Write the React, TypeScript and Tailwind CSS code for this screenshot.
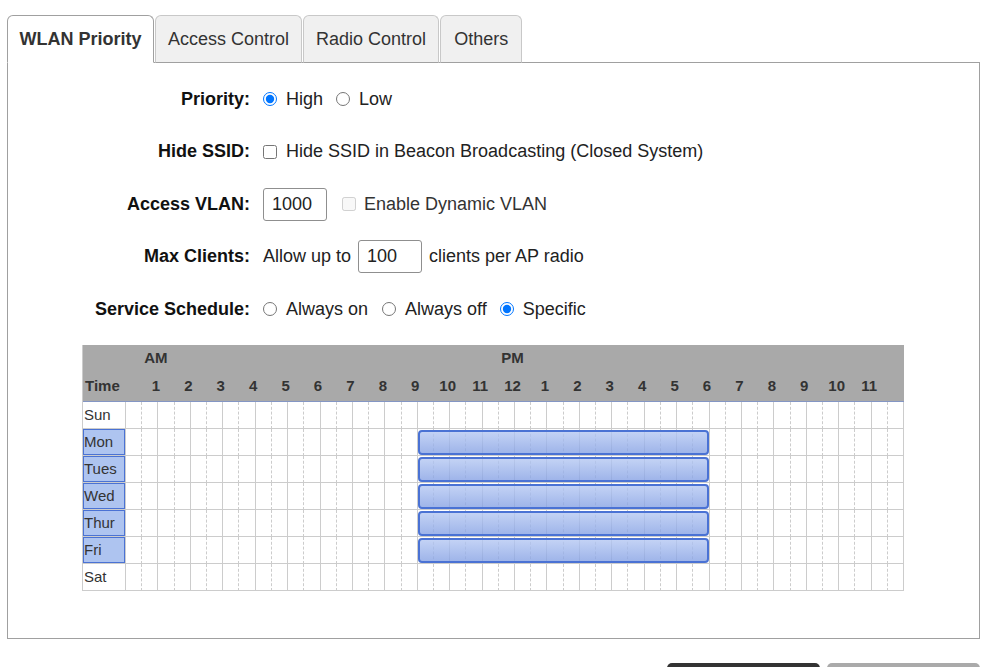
import { ReactNode } from "react"

const tabs = [
  { name: "WLAN Priority", pad: "px-[11.5px]" },
  { name: "Access Control", pad: "px-[12px]" },
  { name: "Radio Control", pad: "px-[12px]" },
  { name: "Others", pad: "px-[13px]" },
]
const days = ["Sun", "Mon", "Tues", "Wed", "Thur", "Fri", "Sat"]
const pmHours = ["1", "2", "3", "4", "5", "6", "7", "8", "9", "10", "11"]
const hourLabels = [...pmHours, "12", ...pmHours]

const Row = ({ label, children }: { label: string; children: ReactNode }) => (
  <div className="grid grid-cols-[242px_1fr] gap-[13px] items-center h-[52.5px]">
    <div className="text-right font-bold text-[#111]">{label}</div>
    <div className="flex items-center">{children}</div>
  </div>
)

const Radio = ({ checked, label, className = "" }: { checked?: boolean; label: string; className?: string }) => (
  <label className={"flex items-center " + className}>
    <input type="radio" defaultChecked={checked} className="w-[14px] h-[14px] m-0 accent-[#0075ff]" />
    <span className="ml-[9px]">{label}</span>
  </label>
)

const Schedule = () => (
  <div className="ml-[74px] mt-[9.5px] w-[822px] text-[15px] text-[#333] border-l border-[#ccc]">
    <div className="bg-[#a9a9a9] font-bold border-b border-[#8496c4]">
      <div className="grid grid-cols-[43px_repeat(48,minmax(0,1fr))] h-[27px] items-center">
        <div className="col-span-2" />
        <div className="col-span-2 text-center pr-[5px]">AM</div>
        <div className="col-span-20" />
        <div className="col-span-2 text-center pr-[5px]">PM</div>
      </div>
      <div className="grid grid-cols-[43px_repeat(48,minmax(0,1fr))] h-[29px] items-center">
        <div className="col-span-2 pl-[2px]">Time</div>
        {hourLabels.map((h, i) => (
          <div key={i} className="col-span-2 text-center pr-[5px]">{h}</div>
        ))}
      </div>
    </div>
    {days.map((d, r) => {
      const weekday = r > 0 && r < 6
      return (
        <div key={d} className="relative grid grid-cols-[43px_repeat(48,minmax(0,1fr))] h-[27px]">
          <div
            className={
              "flex items-center pl-[1px] border-r border-b border-[#ccc] " +
              (weekday ? "bg-[#aec4f0] shadow-[inset_0_0_0_1px_#4a72d4]" : "")
            }
          >
            {d}
          </div>
          {Array.from({ length: 48 }, (_, i) => (
            <div
              key={i}
              className={
                "border-b border-b-[#ccc] border-r border-r-[#ccc] " +
                (i % 2 === 1 ? "" : "border-dashed")
              }
              style={i % 2 === 1 ? undefined : { borderBottomStyle: "solid" }}
            />
          ))}
          {weekday && (
            <div className="absolute top-[1px] bottom-[1px] left-[calc(43px+(100%-43px)*0.375)] w-[calc((100%-43px)*0.375-1px)] rounded-[4px] border-2 border-[#4a72d4] bg-linear-to-b from-[#b4c7f2]/80 to-[#87a2e4]/80" />
          )}
        </div>
      )
    })}
  </div>
)

export default function App() {
  return (
    <div className="w-[998px] h-[667px] overflow-hidden bg-white font-['Liberation_Sans',Arial,sans-serif] text-[18px] text-[#222]">
      <div className="ml-[7px] w-[973px] pt-[15px]">
        <div className="flex gap-px relative z-10 -mb-px">
          {tabs.map((t, i) => (
            <div
              key={t.name}
              className={
                "h-[48px] flex items-center border rounded-t-[6px] text-[#333] " +
                t.pad +
                (i === 0
                  ? " bg-white border-[#a0a0a0] border-b-white font-bold"
                  : " bg-[#f0f0f0] border-[#c8c8c8] border-b-[#a0a0a0]")
              }
            >
              {t.name}
            </div>
          ))}
        </div>
        <div className="border border-[#a0a0a0] h-[577px] pt-[10px]">
          <Row label="Priority:">
            <Radio checked label="High" />
            <Radio label="Low" className="ml-[13px]" />
          </Row>
          <Row label="Hide SSID:">
            <label className="flex items-center">
              <input type="checkbox" className="w-[14px] h-[14px] m-0" />
              <span className="ml-[9px]">Hide SSID in Beacon Broadcasting (Closed System)</span>
            </label>
          </Row>
          <Row label="Access VLAN:">
            <input
              defaultValue="1000"
              className="w-[64px] h-[33px] px-[8px] border border-[#8f8f8f] rounded-[3px] outline-none"
            />
            <label className="flex items-center ml-[15px] text-[#333]">
              <input type="checkbox" disabled className="w-[14px] h-[14px] m-0" />
              <span className="ml-[8px]">Enable Dynamic VLAN</span>
            </label>
          </Row>
          <Row label="Max Clients:">
            <span>Allow up to</span>
            <input
              defaultValue="100"
              className="ml-[7px] w-[64px] h-[33px] px-[8px] border border-[#8f8f8f] rounded-[3px] outline-none"
            />
            <span className="ml-[7px]">clients per AP radio</span>
          </Row>
          <Row label="Service Schedule:">
            <Radio label="Always on" />
            <Radio label="Always off" className="ml-[14px]" />
            <Radio checked label="Specific" className="ml-[13px]" />
          </Row>
          <Schedule />
        </div>
        <div className="flex justify-end gap-[7px] mt-[24px]">
          <button className="w-[153px] h-[38px] rounded-[5px] bg-[#333]" />
          <button className="w-[153px] h-[38px] rounded-[5px] bg-[#aaa]" />
        </div>
      </div>
    </div>
  )
}
